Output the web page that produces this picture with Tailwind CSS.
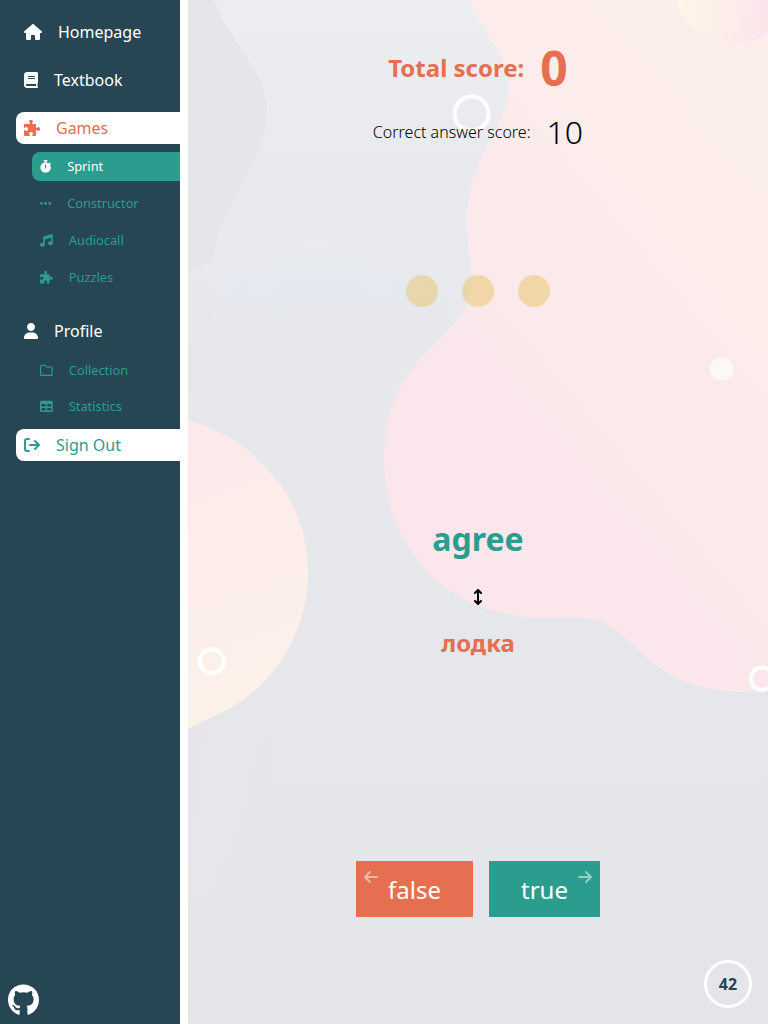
<!DOCTYPE html>
<html lang="en">
<head>
<meta charset="utf-8">
<title>Sprint</title>
<script src="https://cdn.jsdelivr.net/npm/@tailwindcss/browser@4"></script>
</head>
<body class="font-['Noto_Sans',sans-serif] text-base text-black">
<svg class="hidden">
  <symbol id="puzzle" viewBox="0 0 512 512"><path d="M512 288c0 35.35-21.49 64-48 64c-32.43 0-31.72-32-55.64-32C394.9 320 384 330.9 384 344.4V480c0 17.67-14.33 32-32 32h-71.64C266.9 512 256 501.1 256 487.6C256 463.1 288 464.4 288 432c0-26.51-28.65-48-64-48s-64 21.49-64 48c0 32.43 32 31.72 32 55.64C192 501.1 181.1 512 167.6 512H32c-17.67 0-32-14.33-32-32v-135.6C0 330.9 10.91 320 24.36 320C48.05 320 47.6 352 80 352C106.5 352 128 323.3 128 288S106.5 223.1 80 223.1c-32.43 0-31.72 32-55.64 32C10.91 255.1 0 245.1 0 231.6v-71.64c0-17.67 14.33-31.1 32-31.1h135.6C181.1 127.1 192 117.1 192 103.6c0-23.69-32-23.24-32-55.64c0-26.51 28.65-47.1 64-47.1s64 21.49 64 47.1c0 32.43-32 31.72-32 55.64c0 13.45 10.91 24.36 24.36 24.36H352c17.67 0 32 14.33 32 31.1v71.64c0 13.45 10.91 24.36 24.36 24.36c23.69 0 23.24-32 55.64-32C490.5 223.1 512 252.7 512 288z"/></symbol>
</svg>
<div class="flex h-[1024px] w-[768px] overflow-hidden">
  <nav class="flex w-[188px] shrink-0 flex-col border-r-8 border-white bg-[#264653] pt-4 pl-4 text-white">
    <a class="flex h-8 items-center gap-4 pl-2"><svg class="h-4 w-[18px]" viewBox="0 0 576 512" fill="currentColor"><path d="M575.8 255.5C575.8 273.5 560.8 287.6 543.8 287.6H511.8L512.5 447.7C512.5 450.5 512.3 453.1 512 455.8V472C512 494.1 494.1 512 472 512H392C369.9 512 352 494.1 352 472V384C352 366.3 337.7 352 320 352H256C238.3 352 224 366.3 224 384V472C224 494.1 206.1 512 184 512H104C81.91 512 64 494.1 64 472V287.6H32.05C14.02 287.6 0 273.5 0 255.5C0 246.5 3.004 238.5 10.01 231.5L266.4 8.016C273.4 1.002 281.4 0 288.4 0C295.4 0 303.4 2.004 309.5 7.014L564.8 231.5C572.8 238.5 576.9 246.5 575.8 255.5z"/></svg>Homepage</a>
    <a class="mt-4 flex h-8 items-center gap-4 pl-2"><svg class="h-4 w-3.5" viewBox="0 0 448 512" fill="currentColor"><path d="M448 336v-288C448 21.49 426.5 0 400 0H96C42.98 0 0 42.98 0 96v320c0 53.02 42.98 96 96 96h320c17.67 0 32-14.33 32-31.1c0-11.72-6.607-21.52-16-27.1v-81.36C441.8 362.8 448 350.2 448 336zM143.1 128h192C344.8 128 352 135.2 352 144C352 152.8 344.8 160 336 160H143.1C135.2 160 128 152.8 128 144C128 135.2 135.2 128 143.1 128zM143.1 192h192C344.8 192 352 199.2 352 208C352 216.8 344.8 224 336 224H143.1C135.2 224 128 216.8 128 208C128 199.2 135.2 192 143.1 192zM384 448H96c-17.67 0-32-14.33-32-32c0-17.67 14.33-32 32-32h288V448z"/></svg>Textbook</a>
    <a class="mt-4 flex h-8 items-center gap-4 rounded-l-lg bg-white pl-2 text-[#e76f51]"><svg class="size-4" fill="currentColor"><use href="#puzzle"/></svg>Games</a>
    <div class="mt-2 flex flex-col gap-2 pl-4 text-[12.8px] text-[#2a9d8f]">
      <a class="flex h-[29px] items-center gap-4 rounded-l-lg bg-[#2a9d8f] pl-2 text-white"><svg class="h-[12.8px] w-[11.2px]" viewBox="0 0 448 512" fill="currentColor"><path d="M272 0C289.7 0 304 14.33 304 32C304 49.67 289.7 64 272 64H256V98.45C293.5 104.2 327.7 120 355.7 143L377.4 121.4C389.9 108.9 410.1 108.9 422.6 121.4C435.1 133.9 435.1 154.1 422.6 166.6L398.5 190.8C419.7 223.3 432 262.2 432 304C432 418.9 338.9 512 224 512C109.1 512 16 418.9 16 304C16 200 92.32 113.8 192 98.45V64H176C158.3 64 144 49.67 144 32C144 14.33 158.3 0 176 0L272 0zM248 192C248 178.7 237.3 168 224 168C210.7 168 200 178.7 200 192V320C200 333.3 210.7 344 224 344C237.3 344 248 333.3 248 320V192z"/></svg>Sprint</a>
      <a class="flex h-[29px] items-center gap-4 pl-2"><svg class="h-[12.8px] w-[11.2px]" viewBox="0 0 448 512" fill="currentColor"><circle cx="56" cy="256" r="56"/><circle cx="224" cy="256" r="56"/><circle cx="392" cy="256" r="56"/></svg>Constructor</a>
      <a class="flex h-[29px] items-center gap-4 pl-2"><svg class="size-[12.8px]" viewBox="0 0 512 512" fill="currentColor"><path d="M511.1 367.1c0 44.18-42.98 80-95.1 80s-95.1-35.82-95.1-79.1c0-44.18 42.98-79.1 95.1-79.1c11.28 0 21.95 1.92 32.01 4.898V148.1L192 224l-.0023 208.1C191.1 476.2 149 512 95.1 512S0 476.2 0 432c0-44.18 42.98-79.1 95.1-79.1c11.28 0 21.95 1.92 32 4.898V126.5c0-12.97 10.06-26.63 22.41-30.52l319.1-94.49C472.1 .6615 477.3 0 480 0c17.66 0 31.97 14.34 32 31.99L511.1 367.1z"/></svg>Audiocall</a>
      <a class="flex h-[29px] items-center gap-4 pl-2"><svg class="size-[12.8px]" fill="currentColor"><use href="#puzzle"/></svg>Puzzles</a>
    </div>
    <a class="mt-[23px] flex h-8 items-center gap-4 pl-2"><svg class="h-4 w-3.5" viewBox="0 0 448 512" fill="currentColor"><path d="M224 256c70.7 0 128-57.31 128-128s-57.3-128-128-128C153.3 0 96 57.31 96 128S153.3 256 224 256zM274.7 304H173.3C77.61 304 0 381.6 0 477.3c0 19.14 15.52 34.67 34.66 34.67h378.7C432.5 512 448 496.5 448 477.3C448 381.6 370.4 304 274.7 304z"/></svg>Profile</a>
    <div class="mt-[9px] flex flex-col gap-[7px] pl-4 text-[12.8px] text-[#2a9d8f]">
      <a class="flex h-[29px] items-center gap-4 pl-2"><svg class="size-[12.8px]" viewBox="0 0 512 512" fill="currentColor"><path d="M447.1 96h-172.1L226.7 50.75C214.7 38.74 198.5 32 181.5 32H64C28.65 32 0 60.66 0 96v320c0 35.34 28.65 64 64 64h384c35.35 0 64-28.66 64-64V160C512 124.7 483.3 96 447.1 96zM464 416c0 8.824-7.18 16-16 16H64c-8.82 0-16-7.176-16-16V96c0-8.824 7.18-16 16-16h117.5c4.273 0 8.289 1.664 11.31 4.688L256 144h192c8.82 0 16 7.176 16 16V416z"/></svg>Collection</a>
      <a class="flex h-[29px] items-center gap-4 pl-2"><svg class="size-[12.8px]" viewBox="0 0 512 512" fill="currentColor"><path d="M448 32C483.3 32 512 60.65 512 96V416C512 451.3 483.3 480 448 480H64C28.65 480 0 451.3 0 416V96C0 60.65 28.65 32 64 32H448zM224 256V160H64V256H224zM64 320V416H224V320H64zM288 416H448V320H288V416zM448 256V160H288V256H448z"/></svg>Statistics</a>
    </div>
    <a class="mt-2 flex h-8 items-center gap-4 rounded-l-lg bg-white pl-2 text-[#2a9d8f]"><svg class="size-4" viewBox="0 0 512 512" fill="none" stroke="currentColor" stroke-width="64" stroke-linecap="round" stroke-linejoin="round"><path d="M160 64H96a64 64 0 0 0-64 64v256a64 64 0 0 0 64 64h64M192 256h284M352 128l128 128-128 128"/></svg>Sign Out</a>
    <a class="mt-auto -ml-2 pb-2"><svg class="h-8 w-[31px]" viewBox="0 0 496 512" fill="currentColor"><path d="M244.8 8C106.1 8 0 113.3 0 252c0 110.9 69.8 205.8 169.5 239.2 12.8 2.3 17.3-5.6 17.3-12.1 0-6.2-.3-40.4-.3-61.4 0 0-70 15-84.7-29.8 0 0-11.4-29.1-27.8-36.6 0 0-22.9-15.7 1.6-15.4 0 0 24.9 2 38.6 25.8 21.9 38.6 58.6 27.5 72.9 20.9 2.3-16 8.8-27.1 16-33.7-55.9-6.2-112.3-14.3-112.3-110.5 0-27.5 7.6-41.3 23.6-58.9-2.6-6.5-11.1-33.3 2.6-67.9 20.9-6.5 69 27 69 27 20-5.6 41.5-8.5 62.8-8.5s42.8 2.9 62.8 8.5c0 0 48.1-33.6 69-27 13.7 34.7 5.2 61.4 2.6 67.9 16 17.7 25.8 31.5 25.8 58.9 0 96.5-58.9 104.2-114.8 110.5 9.2 7.9 17 22.9 17 46.4 0 33.7-.3 75.4-.3 83.6 0 6.5 4.6 14.4 17.3 12.1C428.2 457.8 496 362.9 496 252 496 113.3 383.5 8 244.8 8z"/></svg></a>
  </nav>
  <main class="relative isolate flex flex-1 flex-col items-center">
    <svg class="absolute inset-0 -z-10 h-full w-full" viewBox="188 0 580 1024">
      <defs>
        <linearGradient id="base" x1="0" y1="0" x2="0" y2="1"><stop offset="0" stop-color="#ecedf1"/><stop offset=".18" stop-color="#e8eaee"/><stop offset=".6" stop-color="#e5e7eb"/><stop offset="1" stop-color="#e4e5e9"/></linearGradient>
        <linearGradient id="pink" gradientUnits="userSpaceOnUse" x1="450" y1="450" x2="760" y2="190"><stop offset="0" stop-color="#fbe6eb"/><stop offset=".55" stop-color="#fbeaeb"/><stop offset="1" stop-color="#fceeea"/></linearGradient>
        <linearGradient id="peach" x1="0" y1="0" x2=".15" y2="1"><stop offset="0" stop-color="#fce9ea"/><stop offset=".5" stop-color="#fcedea"/><stop offset="1" stop-color="#fdf2ea"/></linearGradient>
        <linearGradient id="sun" gradientUnits="userSpaceOnUse" x1="680" y1="0" x2="768" y2="10"><stop offset="0" stop-color="#fef6e7"/><stop offset=".5" stop-color="#fceeea"/><stop offset="1" stop-color="#fbe5ec"/></linearGradient>
        <linearGradient id="shade" x1="0" y1="0" x2="0" y2="1"><stop offset="0" stop-color="#e4e6e9"/><stop offset=".6" stop-color="#e4e6e9"/><stop offset="1" stop-color="#e6e8ec"/></linearGradient>
        <linearGradient id="corner" gradientUnits="userSpaceOnUse" x1="188" y1="780" x2="270" y2="800"><stop offset="0" stop-color="#e7e5eb"/><stop offset="1" stop-color="#e7e5eb" stop-opacity="0"/></linearGradient>
        <linearGradient id="hill" x1="0" y1="0" x2="0" y2="1"><stop offset="0" stop-color="#e9ebee"/><stop offset=".2" stop-color="#e7e9ed"/><stop offset=".6" stop-color="#e6e8ec" stop-opacity=".7"/><stop offset="1" stop-color="#e6e8ec" stop-opacity="0"/></linearGradient>
        <radialGradient id="mist"><stop offset="0" stop-color="#e4e9f2"/><stop offset=".5" stop-color="#e4e9f2" stop-opacity=".7"/><stop offset="1" stop-color="#e4e9f2" stop-opacity="0"/></radialGradient>
      </defs>
      <path fill="url(#base)" d="M188 0h580v1024H188z"/>
      <path fill="url(#shade)" d="M188 0H214C227 40 267 70 267 113C267 165 213 205 212 275C212 330 222 390 208 420H188z"/>
      <path fill="url(#hill)" d="M188 271C225 256 270 241 320 241C370 241 410 262 450 300V400H188z"/>
      <ellipse cx="320" cy="289" rx="120" ry="25" fill="url(#mist)"/>
      <path fill="url(#corner)" d="M188 729L310 700V900H188z"/>
      <path fill="url(#pink)" d="M469 0C483 36 509 53 509 88C509 124 467 158 467 218C467 250 471 258 471 287C469 341 384 348 384 461C384 542 442 616 540 618C567 618 591 613 614 629C639 644 657 689 740 692L768 691V0z"/>
      <path fill="url(#peach)" d="M188 420C255 439 308 497 308 572C308 640 266 695 214 716C203 721 195 725 188 729z"/>
      <circle cx="733" cy="-15" r="59" fill="url(#sun)"/>
      <g fill="none" stroke="#fff" stroke-width="4" stroke-opacity=".95"><circle cx="471.5" cy="113.5" r="17"/><circle cx="211.8" cy="661.3" r="12"/><circle cx="762" cy="678.7" r="11.3"/></g>
      <circle cx="721.5" cy="369" r="11.7" fill="#fdf8f7"/>
    </svg>
    <div class="mt-8 flex h-[72px] items-center gap-4 font-bold text-[#e76f51]"><span class="text-2xl">Total score:</span><span class="text-5xl leading-[72px]">0</span></div>
    <div class="mt-1 flex h-12 items-center gap-4 font-light"><span>Correct answer score:</span><span class="text-[32px] leading-[48px]">10</span></div>
    <div class="mt-[119px] flex gap-6"><i class="size-8 rounded-full bg-[#e9c46a]/50"></i><i class="size-8 rounded-full bg-[#e9c46a]/50"></i><i class="size-8 rounded-full bg-[#e9c46a]/50"></i></div>
    <h1 class="mt-[208px] text-[32px] leading-[48px] font-bold text-[#2a9d8f]">agree</h1>
    <svg class="mt-[26px] h-4 w-2.5" viewBox="0 0 10 16" fill="none" stroke="#000" stroke-width="2" stroke-linecap="round" stroke-linejoin="round"><path d="M5 1.3v13.4M2 4l3-3 3 3M2 12l3 3 3-3"/></svg>
    <h2 class="mt-5 text-2xl leading-9 font-bold text-[#e76f51]">лодка</h2>
    <div class="mt-[200px] flex gap-4 text-2xl text-white">
      <button class="relative h-14 bg-[#e76f51] px-8 pt-0.5">false<svg class="absolute top-2 left-2 h-4 w-3.5 opacity-50" viewBox="0 0 14 16" fill="none" stroke="#fff" stroke-width="2" stroke-linecap="round" stroke-linejoin="round"><path d="M13 8H1M6 3L1 8l5 5"/></svg></button>
      <button class="relative h-14 bg-[#2a9d8f] px-8 pt-0.5">true<svg class="absolute top-2 right-2 h-4 w-3.5 opacity-50" viewBox="0 0 14 16" fill="none" stroke="#fff" stroke-width="2" stroke-linecap="round" stroke-linejoin="round"><path d="M1 8h12M8 3l5 5-5 5"/></svg></button>
    </div>
    <div class="absolute right-4 bottom-4 flex size-12 items-center justify-center rounded-full border-3 border-white font-bold text-[#264653]">42</div>
  </main>
</div>
</body>
</html>
